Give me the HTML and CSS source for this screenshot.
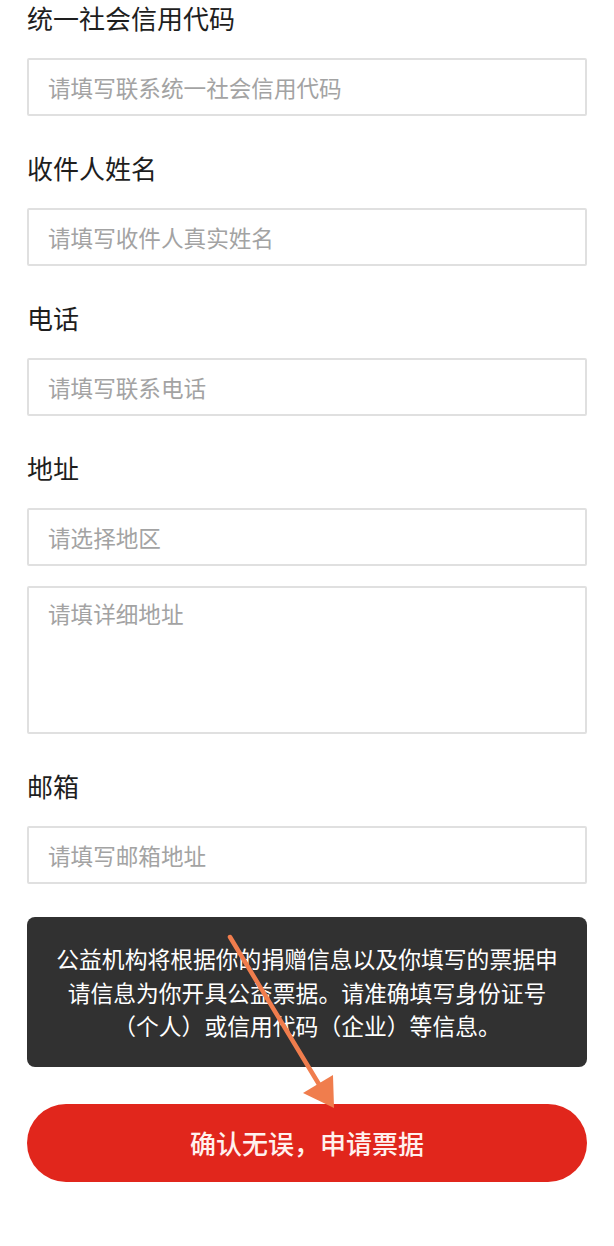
FILE: index.html
```html
<!DOCTYPE html>
<html lang="zh-CN">
<head>
  <meta charset="UTF-8" />
  <meta name="viewport" content="width=device-width, initial-scale=1.0" />
  <title>申请票据</title>
  <link rel="stylesheet" href="styles.css">
</head>
<body>
  <div class="page">
    <form class="invoice-form" novalidate>
      <div class="form-group">
        <label for="creditCode">统一社会信用代码</label>
        <input type="text" id="creditCode" class="field" placeholder="请填写联系统一社会信用代码" />
      </div>
      <div class="form-group">
        <label for="receiver">收件人姓名</label>
        <input type="text" id="receiver" class="field" placeholder="请填写收件人真实姓名" />
      </div>
      <div class="form-group">
        <label for="phone">电话</label>
        <input type="tel" id="phone" class="field" placeholder="请填写联系电话" />
      </div>
      <div class="form-group">
        <label for="region">地址</label>
        <input type="text" id="region" class="field" placeholder="请选择地区" />
        <textarea id="address" class="field field-area" placeholder="请填详细地址"></textarea>
      </div>
      <div class="form-group">
        <label for="email">邮箱</label>
        <input type="email" id="email" class="field" placeholder="请填写邮箱地址" />
      </div>

      <div class="notice">
        公益机构将根据你的捐赠信息以及你填写的票据申<br>
        请信息为你开具公益票据。请准确填写身份证号<br>
        （个人）或信用代码（企业）等信息。
      </div>

      <button type="submit" class="btn">确认无误，申请票据</button>
    </form>

    <!-- annotation arrow drawn over the page -->
    <svg class="arrow" width="614" height="1246" viewBox="0 0 614 1246">
      <line x1="230" y1="937" x2="320" y2="1086" stroke="#f07d4d" stroke-width="4.5" stroke-linecap="round" />
      <polygon points="303,1093 333,1075 334,1108" fill="#f07d4d" />
    </svg>
  </div>
</body>
</html>
```

FILE: styles.css
```css
* { box-sizing: border-box; }
body {
  margin: 0;
  background: #ffffff;
  font-family: "Noto Sans CJK SC", "Noto Sans", sans-serif;
  color: #1e1e1e;
}
.page {
  position: relative;
  width: 614px;
  min-height: 1246px;
}
.invoice-form {
  display: flex;
  flex-direction: column;
  padding: 0 27px;
}
.form-group {
  display: flex;
  flex-direction: column;
  gap: 20px;
  margin-bottom: 34px;
}
.form-group label {
  font-size: 26px;
  line-height: 36px;
  margin-bottom: 2px;
  color: #1e1e1e;
}
.field {
  width: 100%;
  height: 58px;
  padding: 0 19px;
  border: 2px solid #e0e0e0;
  border-radius: 2px;
  background: #fff;
  font-family: inherit;
  font-size: 22.6px;
  color: #333;
  outline: none;
}
.field::placeholder {
  color: #a3a3a3;
}
.field-area {
  height: 148px;
  padding: 10px 19px;
  line-height: 32px;
  resize: none;
}
.notice {
  margin-top: -1px;
  padding: 25px 20px 24px;
  background: #313131;
  border-radius: 8px;
  color: #ffffff;
  font-size: 22.8px;
  line-height: 33.5px;
  text-align: center;
}
.btn {
  margin-top: 37px;
  height: 78px;
  border: none;
  border-radius: 39px;
  background: #e1261c;
  color: #fff1ee;
  font-family: inherit;
  font-size: 26px;
  font-weight: 500;
  cursor: pointer;
}
.arrow {
  position: absolute;
  top: 0;
  left: 0;
  pointer-events: none;
}
```
